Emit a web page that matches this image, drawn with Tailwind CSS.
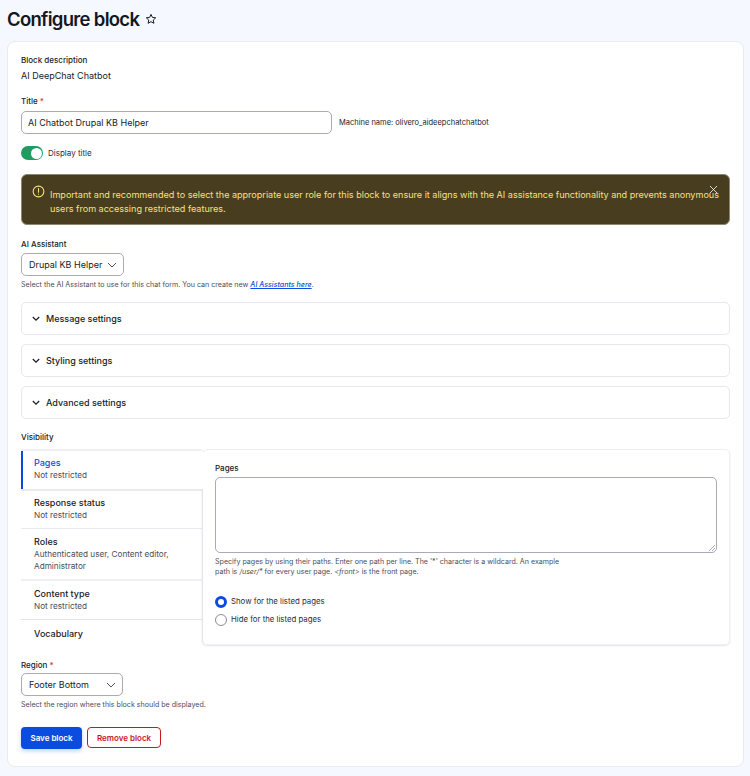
<!DOCTYPE html>
<html lang="en">
<head>
<meta charset="utf-8">
<title>Configure block</title>
<script src="https://cdn.jsdelivr.net/npm/@tailwindcss/browser@4"></script>
</head>
<body class="bg-[#f5f8fe] font-['Inter','Liberation_Sans',sans-serif] text-[#191c24] h-[776px] overflow-hidden antialiased">
<div class="h-[41px] px-[7px] flex items-center gap-[6px] pb-[3px]">
  <h1 class="text-[18.5px] leading-none font-semibold tracking-[-0.7px] text-[#14171f]">Configure block</h1>
  <svg class="w-[12px] h-[12px]" viewBox="0 0 24 24" fill="none" stroke="#191c24" stroke-width="2" stroke-linejoin="round"><path d="M12 2.8l2.8 6 6.6.8-4.9 4.5 1.3 6.5-5.8-3.3-5.8 3.3 1.3-6.5L2.6 9.6l6.6-.8z"/></svg>
</div>
<main class="mx-[7px] w-[737px] h-[726px] bg-white rounded-[8px] border border-[#e9ebf1] px-[13px] pt-[12px]">
  <div class="text-[8px] leading-[12px] font-medium">Block description</div>
  <div class="text-[9px] leading-[12px] mt-[4px]">AI DeepChat Chatbot</div>

  <div class="text-[8px] leading-[12px] font-medium mt-[13px] flex gap-[2px]">Title <span class="text-[#d32f2f] leading-[12px]">*</span></div>
  <div class="flex items-center mt-[4px] gap-[7px]">
    <div class="w-[311px] h-[23px] rounded-[5px] border border-[#a9abb9] flex items-center px-[6px] text-[9px]">AI Chatbot Drupal KB Helper</div>
    <span class="text-[7.5px]">Machine name: olivero_aideepchatchatbot</span>
  </div>

  <div class="flex items-center gap-[5px] mt-[12px]">
    <div class="w-[22px] h-[14px] rounded-full bg-[#1f9d61] flex items-center justify-end pr-[1.5px]"><div class="w-[11px] h-[11px] rounded-full bg-white"></div></div>
    <span class="text-[8px] text-[#2b2e38]">Display title</span>
  </div>

  <div class="relative mt-[14px] h-[51px] rounded-[6px] bg-[#483e1f] border border-[#8d8670] flex gap-[5px] pl-[10px] pt-[13px] text-[#f6e27a] text-[9.05px] leading-[13.5px]">
    <svg class="w-[13px] h-[13px] shrink-0 -mt-[3px]" viewBox="0 0 16 16" fill="none" stroke="#f6e27a" stroke-width="1.3" stroke-linecap="round"><circle cx="8" cy="8" r="6.6"/><path d="M8 4.4v4.4"/><path d="M8 11.2v.3"/></svg>
    <p class="w-[675px]">Important and recommended to select the appropriate user role for this block to ensure it aligns with the AI assistance functionality and prevents anonymous users from accessing restricted features.</p>
    <svg class="absolute right-[11px] top-[10px] w-[9px] h-[9px]" viewBox="0 0 9 9" fill="none" stroke="#fff" stroke-width="0.8"><path d="M1 1l7 7M8 1L1 8"/></svg>
  </div>

  <div class="text-[8px] leading-[12px] font-medium mt-[13px]">AI Assistant</div>
  <div class="mt-[3px] w-[103px] h-[23px] rounded-[5px] border border-[#a9abb9] flex items-center justify-between pl-[7px] pr-[6px] text-[9px] whitespace-nowrap">
    <span>Drupal KB Helper</span>
    <svg class="w-[10px] h-[6px] shrink-0" viewBox="0 0 10 6" fill="none" stroke="#3b3e49" stroke-width="0.9"><path d="M1 1l4 4 4-4"/></svg>
  </div>
  <p class="text-[7.1px] leading-[11px] mt-[3px] text-[#4a4d59]">Select the AI Assistant to use for this chat form. You can create new <a class="italic font-medium underline text-[#0b4ce0]" href="#">AI Assistants here</a>.</p>

  <div class="mt-[12px] flex flex-col gap-[9px]">
    <div class="h-[33px] rounded-[5px] border border-[#e6e8ee] flex items-center gap-[6px] pl-[10px] text-[9px] font-medium">
      <svg class="w-[8px] h-[6px]" viewBox="0 0 8 6" fill="none" stroke="#191c24" stroke-width="1.2"><path d="M.8 1l3.2 3.2L7.2 1"/></svg>Message settings
    </div>
    <div class="h-[33px] rounded-[5px] border border-[#e6e8ee] flex items-center gap-[6px] pl-[10px] text-[9px] font-medium">
      <svg class="w-[8px] h-[6px]" viewBox="0 0 8 6" fill="none" stroke="#191c24" stroke-width="1.2"><path d="M.8 1l3.2 3.2L7.2 1"/></svg>Styling settings
    </div>
    <div class="h-[33px] rounded-[5px] border border-[#e6e8ee] flex items-center gap-[6px] pl-[10px] text-[9px] font-medium">
      <svg class="w-[8px] h-[6px]" viewBox="0 0 8 6" fill="none" stroke="#191c24" stroke-width="1.2"><path d="M.8 1l3.2 3.2L7.2 1"/></svg>Advanced settings
    </div>
  </div>

  <div class="text-[8px] leading-[12px] font-medium mt-[12px]">Visibility</div>
  <div class="mt-[6px] flex h-[196px]">
    <div class="w-[181px] shrink-0 border-t-2 border-[#eeeff3]">
      <div class="relative z-10 w-[182px] h-[38px] bg-white border-l-[2px] border-[#0b4ce0] pl-[11px] pt-[5px]">
        <div class="text-[9px] leading-[13px] font-medium text-[#0b4ce0]">Pages</div>
        <div class="text-[8.2px] leading-[12px] text-[#4a4d59]">Not restricted</div>
      </div>
      <div class="h-[40px] border-t-2 border-b border-[#e9ebf1] pl-[13px] pt-[5px]">
        <div class="text-[9px] leading-[13px] font-medium">Response status</div>
        <div class="text-[8.2px] leading-[12px] text-[#4a4d59]">Not restricted</div>
      </div>
      <div class="h-[52px] border-b-2 border-[#eeeff3] pl-[13px] pt-[6px]">
        <div class="text-[9px] leading-[13px] font-medium">Roles</div>
        <div class="text-[8.2px] leading-[12px] text-[#4a4d59]">Authenticated user, Content editor,<br>Administrator</div>
      </div>
      <div class="h-[39px] border-b border-[#e4e5eb] pl-[13px] pt-[6px]">
        <div class="text-[9px] leading-[13px] font-medium">Content type</div>
        <div class="text-[8.2px] leading-[12px] text-[#4a4d59]">Not restricted</div>
      </div>
      <div class="pl-[13px] pt-[6.5px]">
        <div class="text-[9px] leading-[13px] font-medium">Vocabulary</div>
      </div>
    </div>
    <div class="flex-1 rounded-[5px] border border-[#eeeff3] border-l-[#e4e5eb] shadow-[0_1px_2px_rgba(30,35,60,0.12)] pl-[12px] pt-[12px]">
      <div class="text-[8px] leading-[12px] font-medium">Pages</div>
      <div class="mt-[3px] w-[502px] h-[76px] rounded-[5px] border border-[#a9abb9] relative">
        <svg class="absolute right-[1px] bottom-[1px] w-[6px] h-[6px]" viewBox="0 0 6 6" fill="none" stroke="#8b8d99" stroke-width="0.7"><path d="M6 0L0 6M6 3L3 6"/></svg>
      </div>
      <p class="text-[7.1px] leading-[10px] mt-[4px] w-[350px] text-[#4a4d59]">Specify pages by using their paths. Enter one path per line. The '*' character is a wildcard. An example path is <em>/user/*</em> for every user page. <em>&lt;front&gt;</em> is the front page.</p>
      <div class="flex items-center gap-[4px] mt-[19px] text-[7.8px] text-[#2b2e38]">
        <div class="w-[12px] h-[12px] rounded-full border-[3px] border-[#0b4ce0] bg-white"></div>Show for the listed pages
      </div>
      <div class="flex items-center gap-[4px] mt-[6px] text-[7.8px] text-[#2b2e38]">
        <div class="w-[12px] h-[12px] rounded-full border border-[#8b8d99] bg-white"></div>Hide for the listed pages
      </div>
    </div>
  </div>

  <div class="text-[8px] leading-[12px] font-medium mt-[14px] flex gap-[2px]">Region <span class="text-[#d32f2f] leading-[12px]">*</span></div>
  <div class="mt-[2px] w-[102px] h-[23px] rounded-[5px] border border-[#a9abb9] flex items-center justify-between pl-[7px] pr-[6px] text-[9px] whitespace-nowrap">
    <span>Footer Bottom</span>
    <svg class="w-[10px] h-[6px] shrink-0" viewBox="0 0 10 6" fill="none" stroke="#3b3e49" stroke-width="0.9"><path d="M1 1l4 4 4-4"/></svg>
  </div>
  <p class="text-[7.1px] leading-[11px] mt-[3px] text-[#4a4d59]">Select the region where this block should be displayed.</p>
  <div class="flex items-start gap-[5px] mt-[17px]">
    <button class="w-[61px] h-[22px] rounded-[4px] bg-[#0b4ce0] text-white text-[8px] font-semibold shadow-[0_2px_4px_rgba(11,76,224,0.25)]">Save block</button>
    <button class="w-[74px] h-[21px] rounded-[4px] border border-[#c7161d] bg-white text-[#c7161d] text-[8px] font-semibold">Remove block</button>
  </div>
</main>
</body>
</html>
